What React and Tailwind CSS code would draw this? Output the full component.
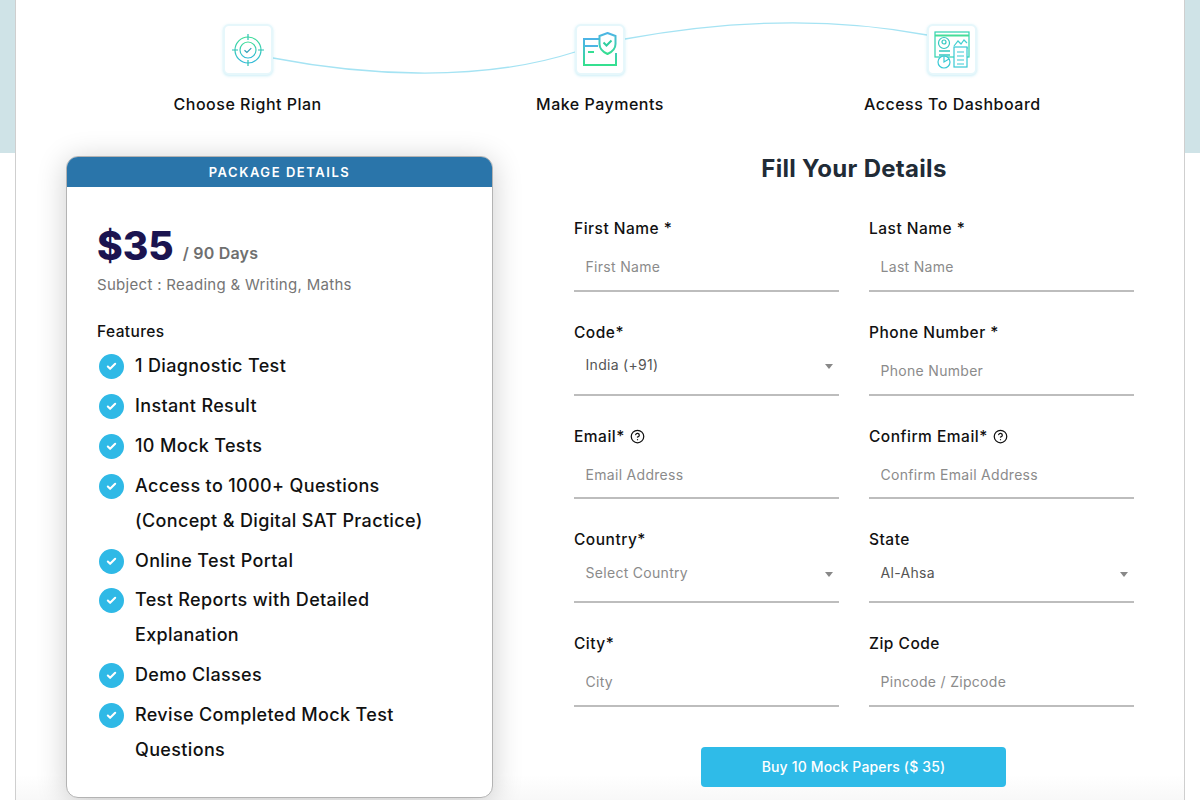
import React from "react";
import { CircleHelp, Check } from "lucide-react";

const features = [
  ["1 Diagnostic Test"],
  ["Instant Result"],
  ["10 Mock Tests"],
  ["Access to 1000+ Questions", "(Concept & Digital SAT Practice)"],
  ["Online Test Portal"],
  ["Test Reports with Detailed", "Explanation"],
  ["Demo Classes"],
  ["Revise Completed Mock Test", "Questions"],
];

const fields = [
  { label: "First Name *", placeholder: "First Name" },
  { label: "Last Name *", placeholder: "Last Name" },
  { label: "Code*", value: "India (+91)", select: true },
  { label: "Phone Number *", placeholder: "Phone Number" },
  { label: "Email*", placeholder: "Email Address", help: true },
  { label: "Confirm Email*", placeholder: "Confirm Email Address", help: true },
  { label: "Country*", value: "Select Country", select: true, muted: true },
  { label: "State", value: "Al-Ahsa", select: true },
  { label: "City*", placeholder: "City" },
  { label: "Zip Code", placeholder: "Pincode / Zipcode" },
];

const TargetIcon = () => (
  <svg width="34" height="34" viewBox="0 0 34 34" fill="none" stroke="url(#g1)" strokeWidth="1.2">
    <defs>
      <linearGradient id="g1" x1="0" y1="0" x2="0" y2="1">
        <stop offset="0" stopColor="#3ddc97" />
        <stop offset="1" stopColor="#2fb8d8" />
      </linearGradient>
    </defs>
    <circle cx="17" cy="17" r="13" />
    <circle cx="17" cy="17" r="8" />
    <path d="M17 1v6M17 27v6M1 17h6M27 17h6" stroke="#2cc4b4" />
    <path d="M13.5 17.2l2.4 2.3 4.4-4.4" stroke="#2f9fb8" />
  </svg>
);

const CardIcon = () => (
  <svg width="36" height="36" viewBox="0 0 36 36" fill="none" strokeWidth="2">
    <defs>
      <linearGradient id="g2" x1="0" y1="0" x2="0" y2="1">
        <stop offset="0" stopColor="#4db4e6" />
        <stop offset="1" stopColor="#34e08f" />
      </linearGradient>
    </defs>
    <path d="M18 7H2v26h32V21" stroke="url(#g2)" />
    <path d="M2 14h14M6 20h6" stroke="url(#g2)" />
    <path d="M25.500 1l8 3v8c0 5-3.500 8-8 10-4.500-2-8-5-8-10V4z" stroke="url(#g2)" fill="#fff" />
    <path d="M21.500 10.500l3 3 5-5" stroke="#2fcf9f" />
  </svg>
);

const DashIcon = () => (
  <svg width="36" height="38" viewBox="0 0 36 38" fill="none" stroke="#2fd3b0" strokeWidth="1.2">
    <rect x="1" y="1" width="34" height="25" />
    <path d="M1 4.500h34" strokeWidth="2" stroke="#45dd99" />
    <circle cx="10" cy="12" r="5.500" stroke="#35c8c0" />
    <circle cx="10" cy="11" r="2" stroke="#35c8c0" />
    <path d="M5 20h11M5 24h11" stroke="#35c8c0" strokeWidth="1.500" />
    <path d="M20 15l4-5 3 3 3-4 3 3M20 17h14" stroke="#40cfd0" />
    <rect x="20" y="16" width="13" height="20" fill="#fff" stroke="#38c9d4" />
    <path d="M23 21h7M23 25h7M23 29h7M23 33h7" stroke="#38c9d4" />
    <circle cx="10" cy="31" r="6" fill="#fff" stroke="#38c9d4" />
    <path d="M10 25v6l5-3" stroke="#38c9d4" />
  </svg>
);

const steps = [
  { label: "Choose Right Plan", icon: <TargetIcon /> },
  { label: "Make Payments", icon: <CardIcon /> },
  { label: "Access To Dashboard", icon: <DashIcon /> },
];

const Field = ({ label, placeholder, value, select, muted, help }) => (
  <div className="flex h-[75px] flex-col">
    <label className="flex h-6 items-center gap-[5px] text-[15.5px] font-medium tracking-[0.5px] text-[#111]">
      {label}
      {help && <CircleHelp size={15} strokeWidth={2} />}
    </label>
    {select ? (
      <div className={`flex flex-1 items-start justify-between border-b-2 border-[#bdbdbd] pl-[11.5px] pr-[6px] pt-[11.5px] text-[14px] leading-[18px] tracking-[0.3px] ${muted ? "text-[#8b8b8b]" : "text-[#555]"}`}>
        <span>{value}</span>
        <span className="mt-[8px] h-0 w-0 border-x-[4px] border-t-[5px] border-x-transparent border-t-[#888]" />
      </div>
    ) : (
      <input
        placeholder={placeholder}
        className="min-h-0 flex-1 border-b-2 border-[#bdbdbd] bg-transparent pl-[11.5px] pt-[2.5px] text-[14px] tracking-[0.3px] outline-none placeholder:text-[#8b8b8b]"
      />
    )}
  </div>
);

const App = () => {
  return (
    <div className="h-[800px] overflow-hidden bg-[linear-gradient(#cfe3e7_153px,#ffffff_153px)] px-[15px] font-['Inter','Liberation_Sans',sans-serif]">
      <div className="relative h-full border-x border-[#cfcfcf] bg-[linear-gradient(#ffffff_775px,#f8f8f8_800px)]">
        {/* connectors between the step boxes */}
        <svg className="absolute left-0 top-0" width="1168" height="100" fill="none" stroke="#a5e3f3" strokeWidth="1.3">
          <path d="M257 58C340 74 460 84 559 52" />
          <path d="M609 39C690 24 800 14 911 35" />
        </svg>

        <div className="relative mx-auto grid w-[1057px] grid-cols-3 pt-6">
          {steps.map((s) => (
            <div key={s.label} className="flex flex-col items-center">
              <div className="flex h-[51px] w-[50px] items-center justify-center rounded-md border-2 border-[#e6f7fb] bg-white shadow-[0_1px_3px_rgba(80,200,230,0.3)]">
                {s.icon}
              </div>
              <div className="mt-[17px] text-[16px] font-medium leading-6 tracking-[0.5px] text-[#111]">{s.label}</div>
            </div>
          ))}
        </div>

        <div className="mt-[40px] flex pl-[50px]">
          <div className="h-[642px] w-[427px] overflow-hidden rounded-xl border border-[#b3b3b3] bg-white shadow-[0_4px_30px_rgba(0,0,0,0.2)]">
            <div className="flex h-[30px] items-center justify-center bg-[#2a75aa] pt-[1px] text-[13px] font-semibold tracking-[1.55px] text-white">
              PACKAGE DETAILS
            </div>
            <div className="px-[30px] pt-[31px]">
              <div className="flex h-[54px] items-center">
                <span className="text-[39px] font-extrabold leading-none text-[#1b1450]">$35</span>
                <span className="ml-[9px] mt-[16px] text-[16px] font-semibold tracking-[0.2px] text-[#6f6f6f]">/ 90 Days</span>
              </div>
              <div className="mt-[1px] text-[15px] leading-6 tracking-[0.3px] text-[#757575]">Subject : Reading &amp; Writing, Maths</div>
              <div className="mt-[23px] text-[15.5px] font-medium leading-6 tracking-[0.4px] text-[#111]">Features</div>
              <ul className="mt-[5px] flex flex-col gap-[5px]">
                {features.map((lines) => (
                  <li key={lines[0]} className="flex items-start gap-[11px] pl-[2px] text-[18px] font-medium leading-[34.9px] tracking-[0.35px] text-[#111]">
                    <span className="mt-[5px] flex size-[25px] shrink-0 items-center justify-center rounded-full bg-[#2fb9e6]">
                      <Check size={11} strokeWidth={4.500} color="#fff" />
                    </span>
                    <span>
                      {lines.map((l) => (
                        <span key={l} className="block whitespace-nowrap">{l}</span>
                      ))}
                    </span>
                  </li>
                ))}
              </ul>
            </div>
          </div>

          <div className="ml-[81px] w-[560px]">
            <h2 className="-mt-[5px] h-[66px] text-center text-[24px] font-bold leading-9 tracking-[0.3px] text-[#212b36]">Fill Your Details</h2>
            <div className="grid grid-cols-2 gap-x-[30px] gap-y-[28.700px]">
              {fields.map((f) => (
                <Field key={f.label} {...f} />
              ))}
            </div>
            <button className="ml-[127px] mt-[40.200px] block h-10 w-[305px] rounded bg-[#2fbbe8] text-[14px] font-medium tracking-[0.15px] text-white">
              Buy 10 Mock Papers ($ 35)
            </button>
          </div>
        </div>
      </div>
    </div>
  );
};

export default App;
